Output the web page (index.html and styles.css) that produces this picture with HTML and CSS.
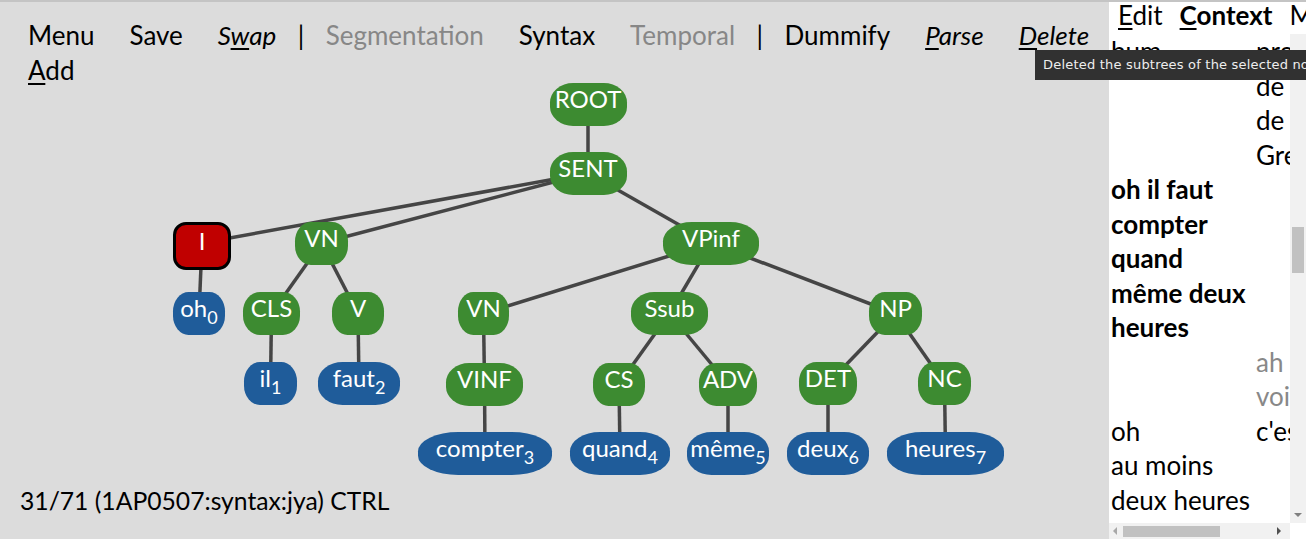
FILE: index.html
```html
<!DOCTYPE html>
<html lang="fr">
<head>
    <meta charset="UTF-8">
    <meta name="viewport" content="width=device-width, initial-scale=1.0">
    <title>Syntax annotation</title>
    <link rel="stylesheet" href="styles.css">
</head>
<body>
    <div class="app">
        <div class="main">
            <div class="menu">
                <span class="item">Menu</span>
                <span class="item">Save</span>
                <span class="item em">S<u>w</u>ap</span>
                <span class="sep">|</span>
                <span class="item off">Segmentation</span>
                <span class="item">Syntax</span>
                <span class="item off">Temporal</span>
                <span class="sep">|</span>
                <span class="item">Dummify</span>
                <span class="item em"><u>P</u>arse</span>
                <span class="item em"><u>D</u>elete</span>
                <span class="item"><u>A</u>dd</span>
            </div>
            <div class="tree" id="tree">
                <svg class="edges" id="edges"></svg>
            </div>
            <div class="status">31/71 (1AP0507:syntax:jya) CTRL</div>
        </div>

        <div class="panel">
            <div class="tabs">
                <span class="tab"><u>E</u>dit</span>
                <span class="tab active"><u>C</u>ontext</span>
                <span class="tab">Metadata</span>
            </div>
            <div class="context">
                <div class="rows">
                    <div class="row">
                        <div class="left">bum</div>
                        <div class="right">professeur de de Grenoble</div>
                    </div>
                    <div class="row current">
                        <div class="left">oh il faut compter quand même deux heures</div>
                        <div class="right"></div>
                    </div>
                    <div class="row">
                        <div class="left"></div>
                        <div class="right other">ah voilà</div>
                    </div>
                    <div class="row">
                        <div class="left">
                            <div>oh</div>
                            <div>au moins deux heures</div>
                        </div>
                        <div class="right">c'est</div>
                    </div>
                </div>
                <div class="vbar">
                    <div class="vthumb"></div>
                    <span class="arrow down"></span>
                </div>
                <div class="hbar">
                    <span class="arrow left"></span>
                    <div class="hthumb"></div>
                    <span class="arrow right"></span>
                </div>
                <div class="corner"></div>
            </div>
        </div>

        <div class="tooltip">Deleted the subtrees of the selected nodes</div>
    </div>

    <script>
        // Tree nodes: centre in page coordinates, width, parent
        const nodes = [
            { id: 'root', label: 'ROOT', x: 588, y: 104, w: 77 },
            { id: 'sent', label: 'SENT', x: 588, y: 173, w: 77, parent: 'root' },
            { id: 'i', label: 'I', x: 202, y: 243, w: 58, parent: 'sent', kind: 'sel' },
            { id: 'vn1', label: 'VN', x: 321.5, y: 243, w: 53, parent: 'sent' },
            { id: 'vpinf', label: 'VPinf', x: 711, y: 243, w: 96, parent: 'sent' },
            { id: 'oh', label: 'oh', sub: '0', x: 199, y: 313.5, w: 52, parent: 'i', kind: 'leaf' },
            { id: 'cls', label: 'CLS', x: 271.5, y: 313.5, w: 57, parent: 'vn1' },
            { id: 'v', label: 'V', x: 358, y: 313.5, w: 52, parent: 'vn1' },
            { id: 'vn2', label: 'VN', x: 483.5, y: 313.5, w: 51, parent: 'vpinf' },
            { id: 'ssub', label: 'Ssub', x: 669.5, y: 313.5, w: 77, parent: 'vpinf' },
            { id: 'np', label: 'NP', x: 895.5, y: 313.5, w: 53, parent: 'vpinf' },
            { id: 'il', label: 'il', sub: '1', x: 270.5, y: 383.5, w: 53, parent: 'cls', kind: 'leaf' },
            { id: 'faut', label: 'faut', sub: '2', x: 359, y: 383.5, w: 82, parent: 'v', kind: 'leaf' },
            { id: 'vinf', label: 'VINF', x: 484.5, y: 384, w: 77, parent: 'vn2' },
            { id: 'cs', label: 'CS', x: 619, y: 384, w: 52, parent: 'ssub' },
            { id: 'adv', label: 'ADV', x: 728, y: 384, w: 58, parent: 'ssub' },
            { id: 'det', label: 'DET', x: 828, y: 383.5, w: 58, parent: 'np' },
            { id: 'nc', label: 'NC', x: 944.5, y: 383.5, w: 53, parent: 'np' },
            { id: 'compter', label: 'compter', sub: '3', x: 485, y: 453.5, w: 134, parent: 'vinf', kind: 'leaf' },
            { id: 'quand', label: 'quand', sub: '4', x: 620, y: 453.5, w: 100, parent: 'cs', kind: 'leaf' },
            { id: 'meme', label: 'même', sub: '5', x: 728, y: 453.5, w: 82, parent: 'adv', kind: 'leaf' },
            { id: 'deux', label: 'deux', sub: '6', x: 828, y: 453.5, w: 82, parent: 'det', kind: 'leaf' },
            { id: 'heures', label: 'heures', sub: '7', x: 945.5, y: 453.5, w: 117, parent: 'nc', kind: 'leaf' }
        ];

        const tree = document.getElementById('tree');
        const edges = document.getElementById('edges');
        const origin = tree.getBoundingClientRect();
        const byId = {};
        nodes.forEach(n => byId[n.id] = n);

        // Edges first, so the nodes sit on top
        nodes.forEach(n => {
            if (!n.parent) return;
            const p = byId[n.parent];
            const line = document.createElementNS('http://www.w3.org/2000/svg', 'line');
            line.setAttribute('x1', p.x - origin.left);
            line.setAttribute('y1', p.y - origin.top);
            line.setAttribute('x2', n.x - origin.left);
            line.setAttribute('y2', n.y - origin.top);
            edges.appendChild(line);
        });

        nodes.forEach(n => {
            const el = document.createElement('div');
            el.className = 'node ' + (n.kind || '');
            el.style.left = (n.x - n.w / 2 - origin.left) + 'px';
            el.style.top = (n.y - 21.5 - origin.top) + 'px';
            el.style.width = n.w + 'px';
            el.innerHTML = n.label + (n.sub ? `<sub>${n.sub}</sub>` : '');
            tree.appendChild(el);
        });
    </script>
</body>
</html>
```

FILE: styles.css
```css
html, body {
    margin: 0;
    height: 100%;
    overflow: hidden;
}

body {
    font-family: Lato, "Liberation Sans", sans-serif;
    font-size: 26px;
    color: #000;
}

u {
    text-decoration-thickness: 2px;
    text-underline-offset: 3px;
}

.app {
    position: relative;
    display: flex;
    height: 100vh;
    box-sizing: border-box;
    border-top: 2px solid #c4c4c4;
}

/* left side: menu, tree, status */
.main {
    flex: 1;
    min-width: 0;
    display: flex;
    flex-direction: column;
    background: #dcdcdc;
}

.menu {
    display: flex;
    flex-wrap: wrap;
    margin-right: -20px;
    padding: 16px 0 0 10.5px;
    line-height: 34.5px;
    white-space: nowrap;
}

.menu .item {
    padding: 0 17.5px;
}

.menu .sep {
    padding: 0 4px;
}

.menu .em {
    font-style: italic;
}

.menu .off {
    color: #878787;
}

.tree {
    flex: 1;
    position: relative;
}

.edges {
    position: absolute;
    left: 0;
    top: 0;
    width: 100%;
    height: 100%;
}

.edges line {
    stroke: #454545;
    stroke-width: 3.5;
}

.node {
    position: absolute;
    height: 43px;
    box-sizing: border-box;
    border-radius: 30% / 45%;
    background: #3d8b31;
    color: #fff;
    font-size: 24px;
    line-height: 31px;
    text-align: center;
    white-space: nowrap;
}

.node.leaf {
    background: #1f5c9a;
}

.node.sel {
    height: 48px;
    background: #c00000;
    border: 3px solid #000;
    border-radius: 13px;
}

.node sub {
    font-size: 18px;
    line-height: 0;
    vertical-align: -7px;
}

.status {
    padding: 0 0 21px 20px;
    font-size: 24.7px;
    line-height: 34.5px;
}

/* right side: context panel */
.panel {
    width: 197px;
    flex: none;
    display: flex;
    flex-direction: column;
    background: #fff;
}

.tabs {
    display: flex;
    height: 32px;
    flex: none;
    padding-left: 9px;
    line-height: 26px;
    white-space: nowrap;
    overflow: hidden;
}

.tab {
    margin-right: 17px;
}

.tab.active {
    font-weight: bold;
}

.context {
    flex: 1;
    min-height: 0;
    display: grid;
    grid-template-columns: 1fr 16px;
    grid-template-rows: 1fr 16px;
}

.rows {
    overflow: hidden;
    padding-left: 2px;
    line-height: 34.5px;
}

.row {
    display: flex;
}

.row .left {
    width: 145px;
    flex: none;
}

.row .right {
    width: 30px;
    flex: none;
}

.row.current .left {
    font-weight: bold;
}

.row .other {
    color: #888;
}

.vbar {
    display: flex;
    flex-direction: column;
    align-items: center;
    padding-top: 193px;
    background: #f1f1f1;
}

.vthumb {
    width: 12px;
    height: 46px;
    background: #c1c1c1;
}

.hbar {
    display: flex;
    align-items: center;
    padding-left: 4px;
    background: #f1f1f1;
}

.hthumb {
    width: 97px;
    height: 11px;
    margin-left: 6px;
    background: #c1c1c1;
}

.corner {
    background: #fff;
}

.arrow {
    width: 0;
    height: 0;
    border: 4px solid transparent;
}

.arrow.down {
    margin-top: auto;
    margin-bottom: 6px;
    border-top-color: #808080;
    border-bottom-width: 0;
}

.arrow.left {
    border-right-color: #a8a8a8;
    border-left-width: 0;
}

.arrow.right {
    margin-left: auto;
    margin-right: 9px;
    border-left-color: #505050;
    border-right-width: 0;
}

.tooltip {
    position: absolute;
    left: 1035px;
    top: 48px;
    height: 30px;
    padding: 0 8px;
    background: #313131;
    color: #eee;
    font-family: "DejaVu Sans", sans-serif;
    font-size: 13px;
    letter-spacing: 0.2px;
    line-height: 30px;
    white-space: nowrap;
}
```
